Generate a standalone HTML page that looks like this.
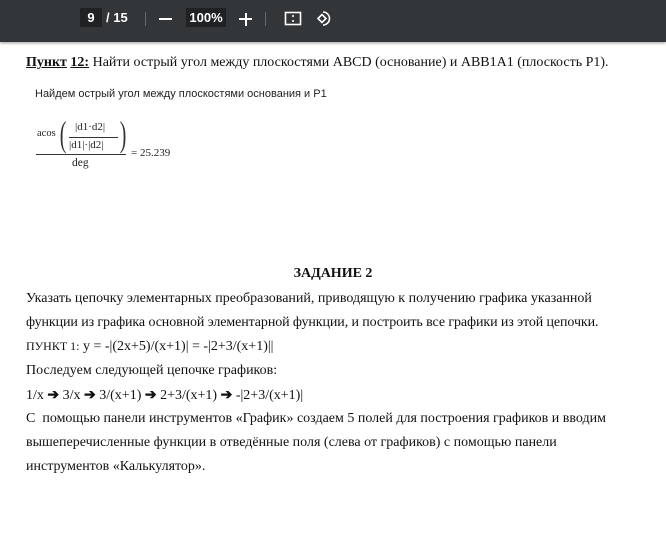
<!DOCTYPE html>
<html><head><meta charset="utf-8"><style>
body{margin:0;width:666px;height:539px;background:#fff;overflow:hidden;position:relative;font-family:"Liberation Serif",serif;color:#111}
.tb{position:absolute;left:0;top:0;width:666px;height:42px;background:#323639;box-shadow:0 1px 3px rgba(0,0,0,.4);color:#fff;font-family:"Liberation Sans",sans-serif;font-size:13px;font-weight:bold}
.a{position:absolute;white-space:nowrap}
.t{position:absolute;left:26px;font-size:14px;white-space:nowrap}
</style></head><body>
<div class="tb">
<div class="a" style="left:80px;top:8px;width:22px;height:19px;background:#1f2123;text-align:center;line-height:19px">9</div>
<div class="a" style="left:106px;top:10px">/ 15</div>
<div class="a" style="left:145px;top:12px;width:1px;height:14px;background:#666"></div>
<div class="a" style="left:159px;top:18px;width:13px;height:2px;background:#fff"></div>
<div class="a" style="left:186px;top:8px;width:40px;height:19px;background:#1f2123;text-align:center;line-height:19px">100%</div>
<div class="a" style="left:239px;top:18px;width:13px;height:2px;background:#fff"></div>
<div class="a" style="left:244.5px;top:12.5px;width:2px;height:13px;background:#fff"></div>
<div class="a" style="left:265px;top:12px;width:1px;height:14px;background:#666"></div>
<svg class="a" style="left:284px;top:10px" width="18" height="18" viewBox="0 0 18 18" fill="none" stroke="#fff" stroke-width="1.6"><rect x="1.5" y="2.5" width="15" height="12"/><path d="M9 5v2M9 10v2"/></svg>
<svg class="a" style="left:315px;top:8px" width="20" height="20" viewBox="0 0 20 20" fill="none" stroke="#fff" stroke-width="1.6"><path d="M8 4A6.5 6.5 0 1 1 8 17"/><path d="M3 10.5l4-4 4 4-4 4z"/></svg>
</div>
<div class="t" style="top:55px;font-size:14px"><b><u>Пункт</u> <u>12:</u></b> Найти острый угол между плоскостями ABCD (основание) и ABB1A1 (плоскость P1).</div>
<div class="a" style="left:35px;top:88px;font-family:'Liberation Sans',sans-serif;font-size:11px;color:#222">Найдем острый угол между плоскостями основания и P1</div>
<div class="a" style="left:37px;top:128px;font-size:10.5px;color:#222">acos</div>
<div class="a" style="left:57px;top:113px;font-size:36px;color:#333;transform:scaleX(.55)">(</div>
<div class="a" style="left:117px;top:113px;font-size:36px;color:#333;transform:scaleX(.55)">)</div>
<div class="a" style="left:75px;top:121px;font-size:11px;color:#222">|d1·d2|</div>
<div class="a" style="left:69px;top:137px;width:49px;height:1px;background:#333"></div>
<div class="a" style="left:69px;top:139px;font-size:11px;color:#222">|d1|·|d2|</div>
<div class="a" style="left:36px;top:154px;width:90px;height:1px;background:#333"></div>
<div class="a" style="left:131px;top:147px;font-size:11px;color:#222">= 25.239</div>
<div class="a" style="left:72px;top:157px;font-size:11.5px;color:#222">deg</div>
<div class="a" style="left:0;width:666px;text-align:center;top:266px;font-size:14px;font-weight:bold">ЗАДАНИЕ 2</div>
<div class="t" style="top:291px">Указать цепочку элементарных преобразований, приводящую к получению графика указанной</div>
<div class="t" style="top:315px;letter-spacing:-.1px">функции из графика основной элементарной функции, и построить все графики из этой цепочки.</div>
<div class="t" style="top:339px"><span style="font-size:12px">ПУНКТ 1:</span> y = -|(2x+5)/(x+1)| = -|2+3/(x+1)||</div>
<div class="t" style="top:363px">Последуем следующей цепочке графиков:</div>
<div class="t" style="top:387px">1/x <b>➔</b> 3/x <b>➔</b> 3/(x+1) <b>➔</b> 2+3/(x+1) <b>➔</b> -|2+3/(x+1)|</div>
<div class="t" style="top:411px">С&nbsp; помощью панели инструментов «График» создаем 5 полей для построения графиков и вводим</div>
<div class="t" style="top:435px">вышеперечисленные функции в отведённые поля (слева от графиков) с помощью панели</div>
<div class="t" style="top:459px">инструментов «Калькулятор».</div>
</body></html>
